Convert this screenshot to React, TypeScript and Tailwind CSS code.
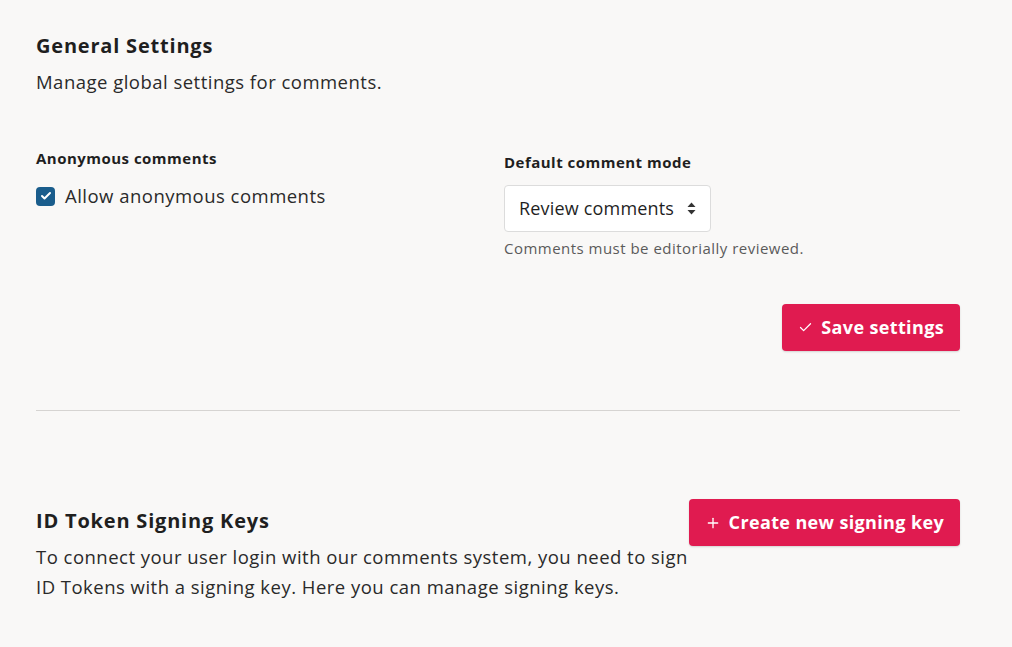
import { Check, Plus } from 'lucide-react';

function App() {
  return (
    <div className="min-h-screen w-full bg-[#f9f8f7] tracking-[0.03em] text-[#1f1f1f]" style={{ fontFamily: '"Open Sans", Lato, sans-serif' }}>
      <div className="pl-9 pr-[52px] pt-[31px]">
        {/* General settings */}
        <section>
          <h2 className="text-[20px] font-bold leading-[30px] tracking-[0.04em]">General Settings</h2>
          <p className="mt-[6px] text-[18.5px] leading-[30px] text-[#2a2a2a]">Manage global settings for comments.</p>

          <div className="mt-[50px] grid grid-cols-2 gap-3">
            <div>
              <div className="text-[15px] font-bold leading-[22px]">Anonymous comments</div>
              <label className="mt-[12px] flex items-center gap-[10px] text-[18.5px] leading-[30px] text-[#2a2a2a]">
                <span className="flex h-[19px] w-[19px] items-center justify-center rounded-[4px] bg-[#1a5d8c]">
                  <Check className="h-[12px] w-[12px] text-white" strokeWidth={4} />
                </span>
                Allow anonymous comments
              </label>
            </div>
            <div className="pt-[4px]">
              <div className="text-[15px] font-bold leading-[22px]">Default comment mode</div>
              <div className="mt-[12px] flex h-[47px] w-[207px] items-center justify-between rounded-[4px] border border-[#dcdcdc] bg-white pl-[14px] pr-[14px] text-[18px] tracking-[0.01em] text-[#1f1f1f]">
                <span>Review comments</span>
                <svg width="9" height="13" viewBox="0 0 9 13" className="fill-[#333]">
                  <path d="M4.5 0.5 L8.5 5 H0.5 Z" />
                  <path d="M4.5 12.5 L8.5 8 H0.5 Z" />
                </svg>
              </div>
              <p className="mt-[5px] text-[15px] leading-[22px] text-[#5b5b5b]">Comments must be editorially reviewed.</p>
            </div>
          </div>

          <div className="mt-[45px] flex justify-end">
            <button className="flex h-[47px] items-center gap-[8px] rounded-[4px] bg-[#e01b50] px-[16px] text-[18px] font-bold tracking-[0.02em] text-white shadow-[0_1px_2px_rgba(0,0,0,0.15)]">
              <Check className="h-[15px] w-[15px]" strokeWidth={2} />
              Save settings
            </button>
          </div>
        </section>

        <hr className="mt-[59px] border-t border-[#d6d4d2]" />

        {/* Signing keys */}
        <section className="mt-[88px] flex items-start">
          <div className="flex-1 pt-[7px]">
            <h2 className="text-[20px] font-bold leading-[30px] tracking-[0.04em]">ID Token Signing Keys</h2>
            <p className="mt-[6px] max-w-[660px] text-[18.5px] leading-[30px] text-[#2a2a2a]">
              To connect your user login with our comments system, you need to sign ID Tokens with a signing key. Here you can manage signing keys.
            </p>
          </div>
          <button className="flex h-[47px] shrink-0 items-center gap-[8px] rounded-[4px] bg-[#e01b50] px-[16px] text-[18px] font-bold tracking-[0.02em] text-white shadow-[0_1px_2px_rgba(0,0,0,0.15)]">
            <Plus className="h-[16px] w-[16px]" strokeWidth={2} />
            Create new signing key
          </button>
        </section>
      </div>
    </div>
  );
}

export default App;
